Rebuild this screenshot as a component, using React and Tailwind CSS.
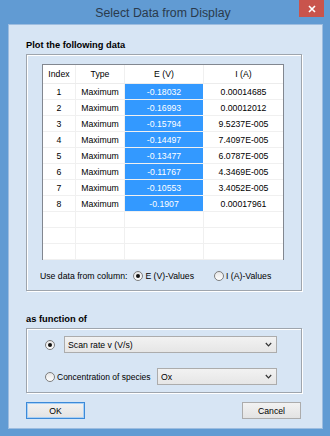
import React from 'react';

const rows = [
  ['1', 'Maximum', '-0.18032', '0.00014685'],
  ['2', 'Maximum', '-0.16993', '0.00012012'],
  ['3', 'Maximum', '-0.15794', '9.5237E-005'],
  ['4', 'Maximum', '-0.14497', '7.4097E-005'],
  ['5', 'Maximum', '-0.13477', '6.0787E-005'],
  ['6', 'Maximum', '-0.11767', '4.3469E-005'],
  ['7', 'Maximum', '-0.10553', '3.4052E-005'],
  ['8', 'Maximum', '-0.1907', '0.00017961'],
];

function Radio({ checked }) {
  return (
    <span className="w-[10px] h-[10px] rounded-full border border-[#7d7d7d] bg-gradient-to-b from-[#e6e6e6] to-[#ffffff] flex items-center justify-center shrink-0">
      {checked && <span className="w-[4px] h-[4px] rounded-full bg-[#111]" />}
    </span>
  );
}

function Chevron() {
  return (
    <svg width="7" height="5" viewBox="0 0 7 5" className="shrink-0">
      <polyline points="0.8,1 3.5,3.8 6.2,1" fill="none" stroke="#333" strokeWidth="1.2" />
    </svg>
  );
}

function Select({ value, className }) {
  return (
    <div
      className={`h-[17px] border border-[#acacac] bg-gradient-to-b from-[#f2f2f2] to-[#e6e6e6] flex items-center justify-between pl-[3px] pr-[4px] ${className}`}
    >
      <span>{value}</span>
      <Chevron />
    </div>
  );
}

function Button({ label, focused }) {
  return (
    <div
      className={`w-[59px] h-[17px] bg-gradient-to-b from-[#f2f2f2] to-[#e3e3e3] flex items-center justify-center border ${focused ? 'border-[#3c8ad8] shadow-[inset_0_0_0_1px_#a9d0f5]' : 'border-[#acacac]'}`}
    >
      {label}
    </div>
  );
}

export default function App() {
  return (
    <div className="w-[330px] h-[436px] bg-[#619bd3] flex flex-col font-['Liberation_Sans',Arial,sans-serif] text-[8.7px] text-black leading-[12px]">
      <div className="h-[24px] grid grid-cols-[1fr_auto_1fr] pr-[6px]">
        <div />
        <div className="pt-[6px] pl-[2px] text-[12.3px] leading-[14px] text-[#2a3a4c]">Select Data from Display</div>
        <div className="flex justify-end">
          <div className="w-[25px] h-[17px] bg-[#c9544c] flex items-center justify-center">
            <svg width="8" height="8" viewBox="0 0 8 8">
              <path d="M1 1 L7 7 M7 1 L1 7" stroke="#fff" strokeWidth="1.6" />
            </svg>
          </div>
        </div>
      </div>

      <div className="flex-1 ml-[8px] mr-[7px] mb-[7px] bg-[#d7e5f4] shadow-[inset_0_0_0_1px_#9dbde0] flex flex-col pl-[18px]">
        <div className="mt-[15px] font-bold text-[9.3px]">Plot the following data</div>

        <div className="mt-[3px] w-[276px] h-[237px] border border-[#9ea5ad] shadow-[inset_1px_1px_0_#ffffff,1px_1px_0_#ffffff] flex flex-col">
          <div className="mt-[9px] ml-[15px] w-[242px] h-[196px] border border-[#828790] bg-white">
            <div className="grid grid-cols-[33px_49px_79px_79px] h-[19px] border-b border-[#ececec] items-center text-center">
              <div className="h-full flex items-center justify-center border-r border-[#f0f0f0]">Index</div>
              <div className="h-full flex items-center justify-center border-r border-[#f0f0f0]">Type</div>
              <div className="h-full flex items-center justify-center border-r border-[#f0f0f0]">E (V)</div>
              <div className="h-full flex items-center justify-center">I (A)</div>
            </div>
            {rows.map((r) => (
              <div key={r[0]} className="grid grid-cols-[33px_49px_79px_79px] h-[16px] border-b border-[#f0f0f0] text-center">
                <div className="flex items-center justify-center border-r border-[#f0f0f0]">{r[0]}</div>
                <div className="flex items-center justify-center border-r border-[#f0f0f0]">{r[1]}</div>
                <div className="flex items-center justify-center bg-[#3399ff] text-white border-r border-white">{r[2]}</div>
                <div className="flex items-center justify-center">{r[3]}</div>
              </div>
            ))}
            {[0, 1, 2].map((i) => (
              <div key={i} className="grid grid-cols-[33px_49px_79px_79px] h-[16px] border-b border-[#f0f0f0]">
                <div className="border-r border-[#f0f0f0]" />
                <div className="border-r border-[#f0f0f0]" />
                <div className="border-r border-[#f0f0f0]" />
                <div />
              </div>
            ))}
          </div>

          <div className="mt-[10px] ml-[13px] h-[12px] flex items-center">
            <span>Use data from column:</span>
            <span className="ml-[6px]"><Radio checked /></span>
            <span className="ml-[2px]">E (V)-Values</span>
            <span className="ml-[20px]"><Radio /></span>
            <span className="ml-[2px]">I (A)-Values</span>
          </div>
        </div>

        <div className="mt-[22px] font-bold text-[9.3px]">as function of</div>

        <div className="mt-[3px] w-[276px] h-[65px] border border-[#9ea5ad] shadow-[inset_1px_1px_0_#ffffff,1px_1px_0_#ffffff] flex flex-col pt-[7px] pl-[18px] pr-[24px] gap-[15px]">
          <div className="h-[17px] flex items-center">
            <Radio checked />
            <Select value="Scan rate v (V/s)" className="ml-[9px] flex-1" />
          </div>
          <div className="h-[17px] flex items-center">
            <Radio />
            <span className="ml-[2px] text-[8.5px]">Concentration of species</span>
            <Select value="Ox" className="ml-auto w-[120px]" />
          </div>
        </div>

        <div className="mt-[9px] w-[275px] flex justify-between">
          <Button label="OK" focused />
          <Button label="Cancel" />
        </div>
      </div>
    </div>
  );
}
